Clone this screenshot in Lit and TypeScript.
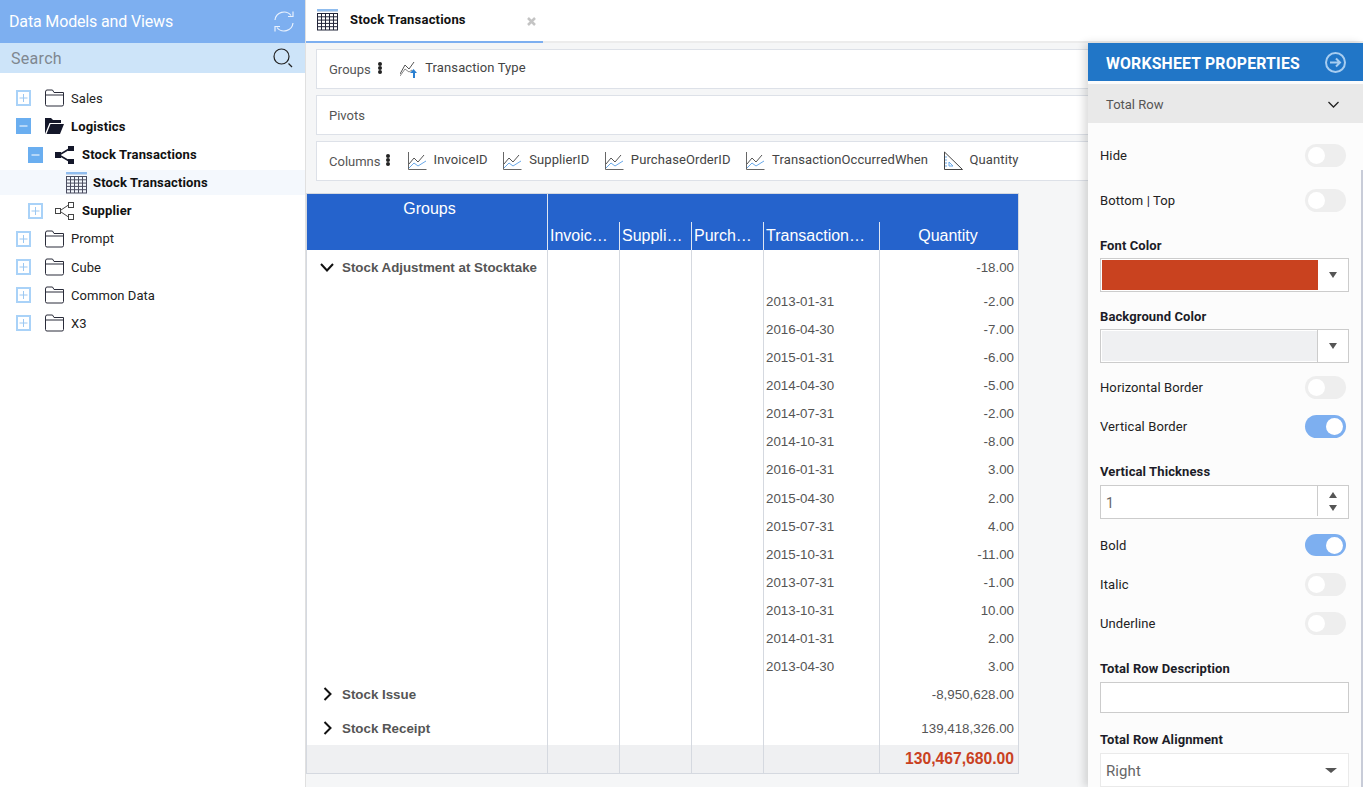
import { LitElement, css, html, svg, nothing } from "lit";
import { customElement } from "lit/decorators.js";

const plusBox = html`<svg class="exp" width="15" height="16" viewBox="0 0 15 16"><rect x="1" y="1" width="13" height="14" fill="#fff" stroke="#a9d2f8" stroke-width="2"/><path d="M7.5 4v8M3.5 8h8" stroke="#9cc8f2" stroke-width="1" fill="none"/></svg>`;
const minusBox = html`<svg class="exp" width="15" height="16" viewBox="0 0 15 16"><rect width="15" height="16" fill="#6aaef0"/><path d="M3.5 8h8" stroke="#fff" stroke-width="1"/></svg>`;
const folder = html`<svg class="ico-folder" width="19" height="18" viewBox="0 0 19 18"><path d="M.5 3V15.5Q.5 17 2 17H17Q18.500 17 18.500 15.500V3.500H9L7.500 1H2Q.5 1 .5 3ZM.5 6H18.500" fill="#fff" stroke="#2a2c3a" stroke-width="1"/></svg>`;
const folderOpen = html`<svg class="ico-folder" width="19" height="18" viewBox="0 0 19 18"><path d="M0 17V1H6L8 3H16V6H4.500L0 17ZM1.500 17L5.500 7H19L15 17Z" fill="#14172a"/></svg>`;
const netFilled = html`<svg class="ico-net" width="20" height="18" viewBox="0 0 20 18"><path d="M4 9L15 2.500M4 9L15 15.500" stroke="#14172a" stroke-width="1.500"/><rect x="0" y="6" width="6" height="6" fill="#14172a"/><rect x="13" y="0" width="6" height="5" fill="#14172a"/><rect x="13" y="13" width="6" height="5" fill="#14172a"/></svg>`;
const netOutline = html`<svg class="ico-net" width="20" height="18" viewBox="0 0 20 18"><path d="M6 8L13.500 3M6 10L13.500 15" stroke="#444" stroke-width="1"/><rect x=".5" y="6.500" width="5" height="5" fill="#fff" stroke="#444"/><rect x="13.500" y=".5" width="5" height="5" fill="#fff" stroke="#444"/><rect x="13.500" y="12.500" width="5" height="5" fill="#fff" stroke="#444"/></svg>`;

function gridIcon(color: string) {
  const lines = [];
  for (let x = 0.5; x <= 21; x += 4) lines.push(svg`<path d="M${x} 4V21" stroke=${color}/>`);
  for (let y = 4.5; y <= 21; y += 3.3) lines.push(svg`<path d="M0 ${y}H21" stroke=${color}/>`);
  return html`<svg width="21" height="22" viewBox="0 0 21 22"><rect width="21" height="2" fill="#8fbcee"/><rect y="2" width="21" height="1" fill="#c8d8ec"/>${lines}</svg>`;
}

const chartIcon = html`<svg width="19" height="20" viewBox="0 0 19 20"><path d="M.5 1V18.500H18.500" fill="none" stroke="#666" stroke-width="1"/><path d="M1 13L6 7L10 11L16 4" fill="none" stroke="#555" stroke-width="1"/><path d="M1 17L6 12L10 15L18 10" fill="none" stroke="#69a8e8" stroke-width="1"/></svg>`;
const groupIcon = html`<svg width="18" height="18" viewBox="0 0 18 18"><path d="M0 14L5 5L9 9L14 2" fill="none" stroke="#555" stroke-width="1"/><path d="M0 16L5 9L9 12L12 10" fill="none" stroke="#888" stroke-width="1"/><path d="M13 18V13H10L13.500 9L17 13H15V18Z" fill="#2a7fd0"/></svg>`;
const rulerIcon = html`<svg width="19" height="20" viewBox="0 0 19 20"><path d="M.5 1V18.500H18.500Z" fill="#fff" stroke="#444" stroke-width="1"/><path d="M5 11V15H9Z" fill="none" stroke="#69a8e8" stroke-width="1"/><path d="M1 6H3M1 9H3M1 12H3M1 15H3" stroke="#69a8e8"/></svg>`;

const chevDown = html`<svg width="14" height="9" viewBox="0 0 14 9"><path d="M1 1L7 7.500L13 1" fill="none" stroke="#111" stroke-width="2"/></svg>`;
const chevRight = html`<svg width="9" height="14" viewBox="0 0 9 14"><path d="M1.500 1L7.500 7L1.500 13" fill="none" stroke="#111" stroke-width="2"/></svg>`;

type Node = { label: string; level: number; open?: boolean; bold?: boolean; kind: "folder" | "net" | "grid"; active?: boolean };

const TREE: Node[] = [
  { label: "Sales", level: 0, kind: "folder" },
  { label: "Logistics", level: 0, kind: "folder", open: true, bold: true },
  { label: "Stock Transactions", level: 1, kind: "net", open: true, bold: true },
  { label: "Stock Transactions", level: 2, kind: "grid", bold: true, active: true },
  { label: "Supplier", level: 1, kind: "net", bold: true },
  { label: "Prompt", level: 0, kind: "folder" },
  { label: "Cube", level: 0, kind: "folder" },
  { label: "Common Data", level: 0, kind: "folder" },
  { label: "X3", level: 0, kind: "folder" },
];

const DETAILS = [
  ["2013-01-31", "-2.00"],
  ["2016-04-30", "-7.00"],
  ["2015-01-31", "-6.00"],
  ["2014-04-30", "-5.00"],
  ["2014-07-31", "-2.00"],
  ["2014-10-31", "-8.00"],
  ["2016-01-31", "3.00"],
  ["2015-04-30", "2.00"],
  ["2015-07-31", "4.00"],
  ["2015-10-31", "-11.00"],
  ["2013-07-31", "-1.00"],
  ["2013-10-31", "10.00"],
  ["2014-01-31", "2.00"],
  ["2013-04-30", "3.00"],
];

const COLUMNS = [
  { label: "InvoiceID", icon: chartIcon },
  { label: "SupplierID", icon: chartIcon },
  { label: "PurchaseOrderID", icon: chartIcon },
  { label: "TransactionOccurredWhen", icon: chartIcon },
  { label: "Quantity", icon: rulerIcon },
];

@customElement("app-root")
export class AppRoot extends LitElement {
  static styles = css`
    :host {
      display: flex;
      width: 1363px;
      height: 787px;
      overflow: hidden;
      position: relative;
      font-family: Roboto, "Noto Sans", sans-serif;
      background: #fff;
    }
    svg {
      display: block;
      flex: none;
    }

    /* left tree */
    .side {
      width: 305px;
      flex: none;
      border-right: 1px solid #e0e0e0;
      background: #fff;
    }
    .side-head {
      height: 43px;
      background: #7daff0;
      color: #fff;
      display: flex;
      align-items: center;
      justify-content: space-between;
      padding: 0 10px 0 9px;
      box-sizing: border-box;
      font-size: 16px;
      letter-spacing: -0.15px;
    }
    .side-search {
      height: 30px;
      background: #cde4f9;
      color: #7f8790;
      display: flex;
      align-items: center;
      justify-content: space-between;
      padding: 0 12px 0 11px;
      font-size: 16px;
      letter-spacing: 0.3px;
    }
    .tree {
      padding-top: 11.2px;
    }
    .node {
      height: 28.15px;
      display: flex;
      align-items: center;
      font-size: 13px;
      color: #222;
      letter-spacing: 0.05px;
    }
    .node.bold {
      font-weight: 700;
      color: #111;
      letter-spacing: 0.15px;
    }
    .node.active {
      background: #f4f8fd;
      height: 25px;
      margin: 1.5px 0 1.65px;
    }
    .l0 {
      padding-left: 16px;
    }
    .l1 {
      padding-left: 28px;
    }
    .l2 {
      padding-left: 66px;
    }
    .ico-folder {
      margin-left: 14px;
      margin-right: 7px;
    }
    .ico-net {
      margin-left: 12px;
      margin-right: 7px;
    }
    .l2 svg {
      margin-right: 6px;
    }

    /* main column */
    .main {
      flex: 1;
      background: #f5f6f7;
      min-width: 0;
    }
    .tabs {
      height: 43px;
      background: #fff;
      border-bottom: 2px solid #ececec;
      box-sizing: border-box;
      display: flex;
    }
    .tab {
      width: 237px;
      height: 43px;
      box-sizing: border-box;
      border-bottom: 2px solid #7daff0;
      display: flex;
      align-items: flex-start;
      padding: 9px 0 0 11px;
      font-size: 13px;
      font-weight: 700;
      color: #111;
      letter-spacing: 0.2px;
      position: relative;
    }
    .tab span {
      margin: 3px 0 0 12px;
    }
    .tab .close {
      position: absolute;
      left: 221px;
      top: 17px;
    }
    .shelf {
      height: 40px;
      box-sizing: border-box;
      margin: 6px 10px 0;
      background: #fff;
      border: 1px solid #dde1e8;
      display: flex;
      align-items: center;
      padding-left: 12px;
      font-size: 13px;
      color: #555;
    }
    .shelf > label {
      margin-top: 1px;
    }
    .kebab {
      display: inline-flex;
      flex-direction: column;
      margin: -2px 0 0 7.5px;
    }
    .kebab.tight {
      margin-left: 5px;
    }
    .kebab i {
      width: 4px;
      height: 4px;
      border-radius: 50%;
      background: #222;
    }
    .item {
      display: flex;
      align-items: center;
      gap: 7px;
      margin-left: 15.5px;
      color: #444;
      letter-spacing: 0.1px;
    }
    .item span {
      margin-top: -4px;
    }
    .shelf .kebab + .item {
      margin-left: 18px;
    }

    /* worksheet table */
    .tbl {
      width: 711px;
      margin-top: 12px;
      border: 1px solid #d5d9e0;
      font-family: "Liberation Sans", Arial, sans-serif;
      color: #555;
      font-size: 13.33px;
      background: #fff;
    }
    .row {
      display: grid;
      grid-template-columns: 241px 72px 72px 72px 116px 1fr;
    }
    .row > div {
      border-right: 1px solid #d5d9e0;
      display: flex;
      align-items: center;
      padding: 0 2px;
      min-width: 0;
    }
    .row > div:last-child {
      border-right: none;
      justify-content: flex-end;
      padding-right: 4px;
    }
    .head {
      background: #2563cc;
      color: #fff;
      font-size: 16px;
      height: 56px;
    }
    .head > div {
      border-right-color: transparent;
      align-items: flex-end;
      padding-bottom: 5px;
      padding-right: 6px;
      position: relative;
    }
    .head > div.sep::after {
      content: "";
      position: absolute;
      right: -1px;
      bottom: 0;
      top: 28px;
      width: 1px;
      background: #dfe6f3;
    }
    .head > div.groups {
      border-right: 1px solid #dfe6f3;
      justify-content: center;
      align-items: flex-start;
      padding: 6px 0 0 5px;
    }
    .head > div:last-child {
      justify-content: center;
      padding-right: 4px;
    }
    .clip {
      overflow: hidden;
      text-overflow: ellipsis;
      white-space: nowrap;
    }
    .grp {
      height: 34px;
    }
    .det {
      height: 28.08px;
    }
    .det.first {
      height: 31.53px;
    }
    .det.first > div {
      padding-top: 3px;
    }
    .grp.short {
      height: 30.57px;
    }
    .grp.short > div {
      padding-bottom: 3px;
    }
    .grp .name {
      padding-left: 13px;
      gap: 8px;
      font-weight: 700;
      color: #555;
      white-space: nowrap;
    }
    .grp .name.closed {
      padding-left: 16px;
      gap: 10px;
    }
    .total {
      height: 28px;
      background: #eff0f2;
    }
    .total > div:last-child {
      color: #c9411f;
      font-weight: 700;
      font-size: 15.7px;
    }

    /* properties panel */
    .panel {
      position: absolute;
      left: 1088px;
      top: 43px;
      width: 275px;
      height: 744px;
      background: #fcfcfc;
      box-shadow: -4px 0 8px rgba(0, 0, 0, 0.14);
      font-size: 13px;
      color: #222;
      letter-spacing: 0.1px;
    }
    .panel-head {
      height: 38px;
      box-sizing: border-box;
      background: #2176c7;
      color: #fff;
      font-weight: 700;
      font-size: 15.8px;
      display: flex;
      align-items: center;
      justify-content: space-between;
      padding: 2px 17px 0 18px;
      letter-spacing: 0.2px;
    }
    .panel-head svg {
      margin-top: -2px;
    }
    .section {
      height: 39px;
      box-sizing: border-box;
      margin-top: 3px;
      background: #e9e9e9;
      color: #555;
      display: flex;
      align-items: center;
      justify-content: space-between;
      padding: 1px 24px 0 18px;
      letter-spacing: 0;
    }
    .panel-body {
      padding: 21px 14px 0 12px;
    }
    .thumb {
      position: absolute;
      right: 0;
      top: 127px;
      bottom: 0;
      width: 2px;
      background: #c8ccd8;
    }
    .tgl-row {
      height: 23px;
      display: flex;
      align-items: center;
      justify-content: space-between;
      padding-right: 3px;
      margin-bottom: var(--gap, 0);
    }
    .tgl-row.slim {
      height: 22px;
    }
    .tgl {
      width: 41px;
      height: 23px;
      border-radius: 12px;
      background: #eeeeee;
      position: relative;
    }
    .slim .tgl {
      height: 22px;
    }
    .tgl::after {
      content: "";
      position: absolute;
      top: 3px;
      left: 3px;
      width: 17px;
      height: 17px;
      border-radius: 50%;
      background: #fff;
    }
    .tgl.on {
      background: #7daff0;
    }
    .tgl.on::after {
      left: 21px;
    }
    .lbl {
      height: 16px;
      line-height: 18px;
      font-weight: 700;
      color: #1c1c28;
      margin-bottom: 5px;
    }
    .box {
      border: 1px solid #ccc;
      background: #fff;
      box-sizing: border-box;
      height: 34px;
      display: flex;
      align-items: stretch;
      color: #666;
      font-size: 14px;
    }
    .swatch {
      flex: 1;
      margin: 1px 0 1px 1px;
    }
    .drop {
      width: 30px;
      flex: none;
      display: flex;
      align-items: center;
      justify-content: center;
      color: #555;
    }
    .tri {
      width: 0;
      height: 0;
      border-left: 4px solid transparent;
      border-right: 4px solid transparent;
      border-top: 6px solid #555;
    }
    .tri.up {
      border-top: none;
      border-bottom: 6px solid #555;
    }
    .val {
      flex: 1;
      display: flex;
      align-items: center;
      padding: 1px 0 0 5px;
    }
    .spin {
      width: 30px;
      flex: none;
      border-left: 1px solid #ccc;
      margin-bottom: 2px;
      display: flex;
      flex-direction: column;
      align-items: center;
      justify-content: center;
      gap: 7px;
    }
    .select {
      border-color: #eaeaea;
      font-size: 15px;
    }
    .select .tri {
      border-left-width: 6px;
      border-right-width: 6px;
      border-top-width: 5px;
    }
    .select .drop {
      width: 34px;
    }
  `;

  private renderNode(n: Node) {
    const icon =
      n.kind === "folder"
        ? n.open
          ? folderOpen
          : folder
        : n.kind === "net"
          ? n.open
            ? netFilled
            : netOutline
          : gridIcon("#4a4d60");
    return html`
      <div class="node l${n.level} ${n.bold ? "bold" : ""} ${n.active ? "active" : ""}">
        ${n.kind === "grid" ? nothing : n.open ? minusBox : plusBox} ${icon}
        <span>${n.label}</span>
      </div>
    `;
  }

  private renderToggle(label: string, on: boolean, gap: number, slim = false) {
    return html`
      <div class="tgl-row ${slim ? "slim" : ""}" style="--gap:${gap}px">
        <span>${label}</span>
        <div class="tgl ${on ? "on" : ""}"></div>
      </div>
    `;
  }

  private renderSide() {
    return html`
      <aside class="side">
        <div class="side-head">
          <span>Data Models and Views</span>
          <svg width="22" height="23" viewBox="0 0 22 23" fill="none" stroke="#e8f1fd" stroke-width="1.200">
            <path d="M2 10A9 9 0 0 1 18 5.500" />
            <path d="M20 1.500V6.500H15" />
            <path d="M20 13A9 9 0 0 1 4 17.500" />
            <path d="M2 21.500V16.500H7" />
          </svg>
        </div>
        <div class="side-search">
          <span>Search</span>
          <svg width="20" height="20" viewBox="0 0 20 20" fill="none" stroke="#222">
            <circle cx="8.500" cy="8.500" r="7.500" stroke-width="1.200" />
            <path d="M15.500 15.500L19 19" stroke-width="1.200" />
          </svg>
        </div>
        <div class="tree">${TREE.map((n) => this.renderNode(n))}</div>
      </aside>
    `;
  }

  private renderTable() {
    const empty = html`<div></div><div></div><div></div><div></div>`;
    return html`
      <div class="tbl">
        <div class="row head">
          <div class="groups">Groups</div>
          <div class="sep"><span class="clip">InvoiceID</span></div>
          <div class="sep"><span class="clip">SupplierID</span></div>
          <div class="sep"><span class="clip">PurchaseOrderID</span></div>
          <div class="sep"><span class="clip">TransactionOccurredWhen</span></div>
          <div>Quantity</div>
        </div>
        <div class="row grp">
          <div class="name">${chevDown}<span>Stock Adjustment at Stocktake</span></div>
          ${empty}
          <div>-18.00</div>
        </div>
        ${DETAILS.map(
          ([date, qty], i) => html`
            <div class="row det ${i === 0 ? "first" : ""}">
              <div></div>
              <div></div>
              <div></div>
              <div></div>
              <div>${date}</div>
              <div>${qty}</div>
            </div>
          `
        )}
        <div class="row grp short">
          <div class="name closed">${chevRight}<span>Stock Issue</span></div>
          ${empty}
          <div>-8,950,628.00</div>
        </div>
        <div class="row grp">
          <div class="name closed">${chevRight}<span>Stock Receipt</span></div>
          ${empty}
          <div>139,418,326.00</div>
        </div>
        <div class="row total">
          <div></div>
          ${empty}
          <div>130,467,680.00</div>
        </div>
      </div>
    `;
  }

  private renderPanel() {
    return html`
      <section class="panel">
        <div class="panel-head">
          <span>WORKSHEET PROPERTIES</span>
          <svg width="21" height="21" viewBox="0 0 21 21" fill="none" stroke="#a8cdf0" stroke-width="2">
            <circle cx="10.500" cy="10.500" r="9.500" />
            <path d="M5 10.500H15M11 6.500L15 10.500L11 14.500" />
          </svg>
        </div>
        <div class="section">
          <span>Total Row</span>
          <svg width="11" height="7" viewBox="0 0 11 7"><path d="M.5 1L5.500 6L10.500 1" fill="none" stroke="#222" stroke-width="1.300" /></svg>
        </div>
        <div class="panel-body">
          ${this.renderToggle("Hide", false, 22)} ${this.renderToggle("Bottom | Top", false, 25)}
          <div class="lbl">Font Color</div>
          <div class="box" style="margin-bottom:16px">
            <div class="swatch" style="background:#c9421f"></div>
            <div class="drop"><div class="tri"></div></div>
          </div>
          <div class="lbl">Background Color</div>
          <div class="box" style="margin-bottom:13px">
            <div class="swatch" style="background:#eff0f2"></div>
            <div class="drop" style="border-left:1px solid #ccc"><div class="tri"></div></div>
          </div>
          ${this.renderToggle("Horizontal Border", false, 16)} ${this.renderToggle("Vertical Border", true, 25)}
          <div class="lbl" style="margin-bottom:6px">Vertical Thickness</div>
          <div class="box" style="margin-bottom:15px">
            <div class="val">1</div>
            <div class="spin"><div class="tri up"></div><div class="tri"></div></div>
          </div>
          ${this.renderToggle("Bold", true, 17, true)} ${this.renderToggle("Italic", false, 16)}
          ${this.renderToggle("Underline", false, 25)}
          <div class="lbl" style="margin-bottom:6px">Total Row Description</div>
          <div class="box" style="height:31px;margin-bottom:18px"></div>
          <div class="lbl" style="margin-bottom:6px">Total Row Alignment</div>
          <div class="box select">
            <div class="val">Right</div>
            <div class="drop"><div class="tri"></div></div>
          </div>
        </div>
        <div class="thumb"></div>
      </section>
    `;
  }

  render() {
    return html`
      ${this.renderSide()}
      <main class="main">
        <div class="tabs">
          <div class="tab">
            ${gridIcon("#23263a")}
            <span>Stock Transactions</span>
            <svg class="close" width="9" height="9" viewBox="0 0 9 9"><path d="M1 1L8 8M8 1L1 8" stroke="#c4c4c4" stroke-width="2.500" /></svg>
          </div>
        </div>
        <div class="shelf">
          <label>Groups</label><span class="kebab"><i></i><i></i><i></i></span>
          <div class="item">${groupIcon}<span>Transaction Type</span></div>
        </div>
        <div class="shelf"><label>Pivots</label></div>
        <div class="shelf">
          <label>Columns</label><span class="kebab tight"><i></i><i></i><i></i></span>
          ${COLUMNS.map((c) => html`<div class="item">${c.icon}<span>${c.label}</span></div>`)}
        </div>
        ${this.renderTable()}
      </main>
      ${this.renderPanel()}
    `;
  }
}
